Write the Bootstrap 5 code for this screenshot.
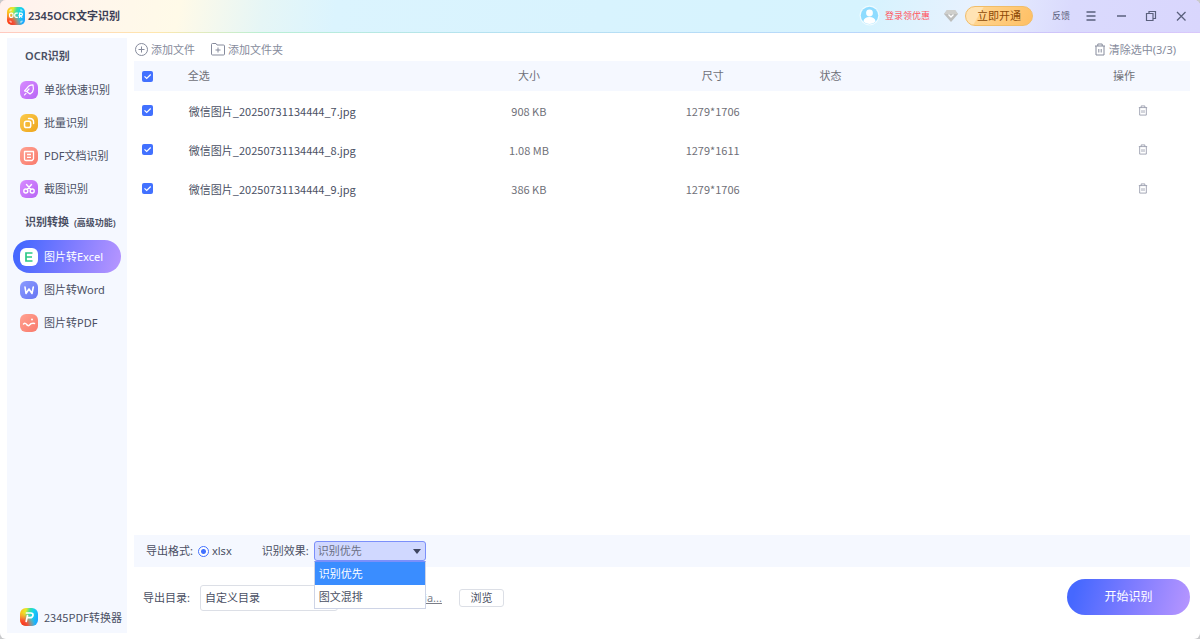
<!DOCTYPE html>
<html lang="zh-CN">
<head>
<meta charset="utf-8">
<meta name="viewport" content="width=device-width, initial-scale=1">
<title>2345OCR文字识别</title>
<link rel="stylesheet" href="https://cdn.jsdelivr.net/npm/bootstrap@5.3.0/dist/css/bootstrap.min.css">
<style>
  html { background: #c9cacc; overflow: hidden; }
  body { font: 11px/16px "Noto Sans", "Noto Sans CJK SC", sans-serif; color: #4a4f63; background: #fff; overflow: hidden; border-radius: 6px; }
  button, select { font: inherit; color: inherit; }
  .btn-plain { border: 0; background: none; padding: 0; display: inline-flex; align-items: center; }
  svg { display: block; flex: none; }
  a { color: inherit; text-decoration: none; }

  .titlebar { height: 33px; padding: 0 13px 1px 7px; border-bottom: 1px solid transparent;
    background: linear-gradient(100deg, #fff1ee 0%, #fff6ec 7%, #fffae8 15%, #e6f6f6 22%, #dbf4fe 28%, #d8f3fe 50%, #d6f3fe 72%, #e8f1fe 81%, #dadafd 89%, #d9d6fd 100%) padding-box,
      linear-gradient(90deg, #ffc9c0, #ffe7ae 13%, #b9efd4 22%, #b5e2f0 40%, #b8d8fb 70%, #cfc4fa 88%, #d9c8fb) border-box; }
  .app-name { font-weight: 600; color: #3c4056; margin-left: 3px; }
  .tiny { font-size: 9px; }
  .login { color: #ff5560; gap: 5px; }
  .vip-gem { margin: 0 7px 0 14px; }
  .open-vip { height: 20px; width: 68px; border-radius: 10px; border: 1px solid #f1bd68; color: #8d4a08;
    background: linear-gradient(120deg, #ffe3b4 0 22%, #ffd38d 24%, #ffbf63); padding: 0; }
  .win-tools { gap: 18px; color: #5a607c; }
  .feedback { margin: 0 -3px 0 19px; }

  .work { min-height: 0; padding: 5px 10px 0 7px; gap: 7px; }
  .side { width: 120px; background: #f5f8ff; padding-top: 1px; margin-bottom: 6px; }
  .side h2 { font-size: 11px; line-height: 34px; font-weight: 600; margin: 0; padding-left: 18px; color: #4a4f63; white-space: nowrap; }
  .side h2 .tiny { margin-left: 2px; }
  .side-link { height: 33px; margin: 0 6px; padding-left: 7px; gap: 6px; border-radius: 17px; white-space: nowrap; }
  .side-link.active, .start { background: linear-gradient(105deg, #4668ff 8%, #7c7bff 50%, #b394ff 96%); color: #fff; }
  .narrow, .files td { font-family: "Noto Sans CJK SC", sans-serif; }

  .tools { height: 23px; color: #868b9c; padding: 0 14px 0 1px; }
  .tools .btn-plain { gap: 3px; }
  .files { table-layout: fixed; margin: 0; }
  .files th, .files td { padding: 0; border: 0; font-weight: 400; text-align: center; vertical-align: middle; box-shadow: none; color: #6f7078; height: 39px; background: none; }
  .files thead th { height: 30px; background: #f5f8ff; }
  .files .c-check { text-align: left; padding-left: 8px; }
  .files .c-name { text-align: left; white-space: nowrap; }
  .files td.c-name { color: #4a4f63; padding-left: 1px; }
  .files .c-state { text-align: left; padding-left: 15px; }
  .files td.c-act { padding-left: 39px; }
  .files .btn-plain { color: #9498a8; }
  .files .form-check-input, .format .form-check-input { width: 11px; height: 11px; margin: 0; float: none; display: block; flex: none; }
  .files .form-check-input { border-radius: 2px; border: 0; }
  .files .form-check-input:checked { background: #4271ff url("data:image/svg+xml,%3Csvg xmlns='http://www.w3.org/2000/svg' viewBox='0 0 11 11'%3E%3Cpath d='m2.500 5.300 2.200 2.200 4-4' fill='none' stroke='%23fff' stroke-width='1.200'/%3E%3C/svg%3E"); }
  .format .form-check-input:checked { border-color: #4271ff; background: radial-gradient(circle, #4271ff 0 2px, #fff 3px); }

  .format { height: 32px; background: #f5f8ff; padding-left: 12px; }
  .format .form-check-input { margin: 0 3px 0 5px; }
  .effect { margin: 0 5px 0 30px; }
  .pick { width: 112px; height: 20px; border: 1px solid #7b8ffa; border-radius: 3px; background: #d0d8ff; padding: 0 3px; appearance: none; display: block; color: #6a6f84; outline: 0; }
  .pick-arrow { right: 5px; top: 8px; pointer-events: none; }
  .pick-list { left: 0; top: 20px; width: 112px; z-index: 5; background: #fff; border: 1px solid #ced4e6; border-top-color: #7b8ffa; line-height: 23px; }
  .pick-list li { padding-left: 4px; }
  .pick-list .chosen { background: #3a8dff; color: #fff; }
  .output { height: 62px; margin-bottom: 10px; padding-left: 9px; }
  .folder { width: 138px; height: 26px; border: 1px solid #dcdfe6; border-radius: 3px; background-color: #fff; padding: 0 4px; appearance: none; margin-left: 10px; }
  .path { width: 105px; padding-right: 1px; text-align: right; text-decoration: underline; color: #7b7e88; }
  .browse { width: 45px; height: 18px; border: 1px solid #dcdfe6; border-radius: 3px; background: #fff; padding: 0; margin-left: 16px; }
  .start { width: 123px; height: 36px; border: 0; border-radius: 18px; font-size: 12px; margin-bottom: 2px; }
</style>
</head>
<body class="d-flex flex-column vh-100">

<svg width="0" height="0" class="position-absolute" aria-hidden="true">
  <defs>
    <linearGradient id="gPurple" x1="0" y1="0" x2="1" y2="1"><stop offset="0" stop-color="#d88cff"/><stop offset="1" stop-color="#b765f5"/></linearGradient>
    <linearGradient id="gGold" x1="0" y1="0" x2="1" y2="1"><stop offset="0" stop-color="#fccb4b"/><stop offset="1" stop-color="#eda51d"/></linearGradient>
    <linearGradient id="gCoral" x1="0" y1="0" x2="1" y2="1"><stop offset="0" stop-color="#ffa291"/><stop offset="1" stop-color="#f97a6c"/></linearGradient>
    <linearGradient id="gBlue" x1="0" y1="0" x2="1" y2="1"><stop offset="0" stop-color="#8c9cff"/><stop offset="1" stop-color="#6675f3"/></linearGradient>
    <linearGradient id="gRain" x1="0" y1=".3" x2="1" y2=".6"><stop offset="0" stop-color="#ffc21a"/><stop offset=".25" stop-color="#e6ea2c"/><stop offset=".45" stop-color="#3fe09c"/><stop offset=".65" stop-color="#16d3ee"/><stop offset="1" stop-color="#1ea6ff"/></linearGradient>
    <radialGradient id="gRain2" cx=".1" cy="1" r=".75"><stop offset="0" stop-color="#ff2318"/><stop offset=".45" stop-color="#ff4a30" stop-opacity=".9"/><stop offset="1" stop-color="#ff7a40" stop-opacity="0"/></radialGradient>
    <symbol id="trash" viewBox="0 0 12 13"><path d="M1 3h10M3.800 3V1h4.400v2M2 3v9h8V3M4.800 6v3.500M7.200 6v3.500" fill="none" stroke="currentColor" stroke-linejoin="round"/></symbol>
  </defs>
</svg>

<header class="titlebar d-flex align-items-center">
  <svg width="18" height="18" viewBox="0 0 18 18"><rect width="18" height="18" rx="5" fill="url(#gRain)"/><rect width="18" height="18" rx="5" fill="url(#gRain2)"/>
    <g fill="none" stroke="#fff"><path d="M3 4.500V3h2M13 3h2v1.500M3 13.500V15h2M13 15h2v-1.500" stroke-width=".7"/><g stroke-width="1.200"><rect x="2.600" y="6.200" width="3.400" height="4.200" rx="1.300"/><path d="M10.800 6.200H9.200q-1.500 0-1.500 2.100t1.500 2.100h1.600M12.500 11V6.200h1.700q1.200 0 1.200 1.200t-1.200 1.200h-1.500l2.600 2"/></g></g></svg>
  <span class="app-name">2345OCR文字识别</span>
  <div class="d-flex align-items-center ms-auto">
    <a href="#" class="login tiny d-flex align-items-center">
      <svg width="21" height="21" viewBox="0 0 21 21"><circle cx="10.500" cy="10.500" r="10" fill="#effbff"/><circle cx="10.500" cy="10.500" r="8.700" fill="#8fdcff"/><circle cx="10.500" cy="8" r="3.400" fill="#fff"/><path d="M4.300 16.500q.7-4.500 6.200-4.500t6.200 4.500a8.700 8.700 0 0 1-12.400 0z" fill="#fff"/></svg>
      登录领优惠</a>
    <svg class="vip-gem" width="14" height="12" viewBox="0 0 14 12"><path d="M3 0h8l3 4-7 8L0 4z" fill="#bdbebd"/><path d="M3 0h8l3 4H0z" fill="#cfcfcc"/><path d="M4.500 4.500 7 7l2.500-2.500" fill="none" stroke="#fff" stroke-width="1.300"/></svg>
    <button type="button" class="open-vip">立即开通</button>
    <div class="win-tools d-flex align-items-center">
      <a href="#" class="tiny feedback">反馈</a>
      <button type="button" class="btn-plain" aria-label="菜单"><svg width="12" height="12" viewBox="0 0 12 12"><path d="M1.500 2h9M1.500 6h9M1.500 10h9" stroke="currentColor" stroke-width="1.300"/></svg></button>
      <button type="button" class="btn-plain" aria-label="最小化"><svg width="12" height="12" viewBox="0 0 12 12"><path d="M2 6h9" stroke="currentColor" stroke-width="1.500"/></svg></button>
      <button type="button" class="btn-plain" aria-label="还原"><svg width="12" height="12" viewBox="0 0 12 12"><path d="M1.500 3.500h6.500v7H1.500zM4 3.500v-2h6.500v7H8" fill="none" stroke="currentColor" stroke-width="1.200"/></svg></button>
      <button type="button" class="btn-plain" aria-label="关闭"><svg width="12" height="12" viewBox="0 0 12 12"><path d="m2 2 8.500 8.500m0-8.500L2 10.500" stroke="currentColor" stroke-width="1.300"/></svg></button>
    </div>
  </div>
</header>

<div class="work d-flex flex-grow-1">
  <nav class="side d-flex flex-column flex-shrink-0">
    <h2>OCR识别</h2>
    <a href="#" class="side-link d-flex align-items-center"><svg width="18" height="18" viewBox="0 0 18 18"><rect width="18" height="18" rx="6" fill="url(#gPurple)"/><path d="M13 3.800Q8.500 4 7 7.200L4.500 10l2.200.5 3.300 2.500 2.500-2Q14 8 13 3.800zM6.700 10.500 9 8M6 12.300l-1.500 1.500" fill="none" stroke="#fff" stroke-width="1.200" stroke-linejoin="round" stroke-linecap="round"/></svg>单张快速识别</a>
    <a href="#" class="side-link d-flex align-items-center"><svg width="18" height="18" viewBox="0 0 18 18"><rect width="18" height="18" rx="6" fill="url(#gGold)"/><rect x="4.500" y="7.300" width="6.200" height="6.200" rx="1.800" fill="none" stroke="#fff" stroke-width="1.500"/><path d="M8.500 4.500h1.300q3.800 0 3.800 3.800v1.200" fill="none" stroke="#fff" stroke-width="1.400" stroke-linecap="round"/></svg>批量识别</a>
    <a href="#" class="side-link d-flex align-items-center"><svg width="18" height="18" viewBox="0 0 18 18"><rect width="18" height="18" rx="6" fill="url(#gCoral)"/><path d="M4.500 4.500h9v7.500l-1.500 1.500H6q-1.500 0-1.500-1.500zM7 7.500h4M7 10.300h4" fill="none" stroke="#fff" stroke-width="1.300" stroke-linejoin="round"/></svg>PDF文档识别</a>
    <a href="#" class="side-link d-flex align-items-center"><svg width="18" height="18" viewBox="0 0 18 18"><rect width="18" height="18" rx="6" fill="url(#gPurple)"/><g fill="none" stroke="#fff" stroke-width="1.400" stroke-linecap="round"><circle cx="5.800" cy="11" r="2"/><circle cx="12.200" cy="11" r="2"/><path d="m6.500 4.500 4.500 5M11.500 4.500 7 9.500"/></g></svg>截图识别</a>
    <h2>识别转换 <span class="tiny">(高级功能)</span></h2>
    <a href="#" class="side-link active d-flex align-items-center"><svg width="18" height="18" viewBox="0 0 18 18"><rect width="18" height="18" rx="6" fill="#fff"/><path d="M12.500 5H6v8h6.500M6 9h6" fill="none" stroke="#2cc987" stroke-width="1.700"/></svg>图片转Excel</a>
    <a href="#" class="side-link d-flex align-items-center"><svg width="18" height="18" viewBox="0 0 18 18"><rect width="18" height="18" rx="6" fill="url(#gBlue)"/><path d="m5 6 1 6.500L9 8l3 4.500L13.300 6" fill="none" stroke="#fff" stroke-width="1.600" stroke-linejoin="round" stroke-linecap="round"/></svg>图片转Word</a>
    <a href="#" class="side-link d-flex align-items-center"><svg width="18" height="18" viewBox="0 0 18 18"><rect width="18" height="18" rx="6" fill="url(#gCoral)"/><path d="M3.500 10q1.800-1.500 3.200.5T9.500 11l1.500-1.300q1-.5 3.500-.3" fill="none" stroke="#fff" stroke-width="1.500" stroke-linecap="round"/><circle cx="12" cy="5.500" r="1" fill="#fff"/></svg>图片转PDF</a>
    <a href="#" class="side-link narrow d-flex align-items-center mt-auto"><svg width="18" height="18" viewBox="0 0 18 18"><rect width="18" height="18" rx="6" fill="url(#gRain)"/><rect width="18" height="18" rx="6" fill="url(#gRain2)"/><path d="M6.500 5h4.300q2.500 0 2.200 2.300-.4 2.400-3 2.400H8M7.500 7.500l-1.300 6" fill="none" stroke="#fff" stroke-width="1.700" stroke-linecap="round"/></svg>2345PDF转换器</a>
  </nav>

  <main class="d-flex flex-column flex-grow-1">
    <div class="tools d-flex align-items-center">
      <button type="button" class="btn-plain"><svg width="13" height="13" viewBox="0 0 13 13"><path d="M6.500 3.500v6M3.500 6.500h6" stroke="currentColor"/><circle cx="6.500" cy="6.500" r="6" fill="none" stroke="currentColor"/></svg>添加文件</button>
      <button type="button" class="btn-plain ms-3"><svg width="14" height="13" viewBox="0 0 14 13"><path d="M.5 1.500q0-1 1-1H5l1 1.500h6.500q1 0 1 1v8q0 1-1 1h-11q-1 0-1-1zM7 4.500v5M4.500 7h5" fill="none" stroke="currentColor"/></svg>添加文件夹</button>
      <button type="button" class="btn-plain ms-auto"><svg width="12" height="13"><use href="#trash"/></svg>清除选中(3/3)</button>
    </div>

    <table class="files table">
      <colgroup><col style="width:5.100%"><col style="width:23.600%"><col style="width:17.400%"><col style="width:17.400%"><col style="width:24%"><col style="width:12.500%"></colgroup>
      <thead>
        <tr><th class="c-check"><input class="form-check-input" type="checkbox" id="all" checked></th><th class="c-name"><label for="all">全选</label></th><th>大小</th><th>尺寸</th><th class="c-state">状态</th><th>操作</th></tr>
      </thead>
      <tbody>
        <tr><td class="c-check"><input class="form-check-input" type="checkbox" id="f7" checked></td><td class="c-name"><label for="f7">微信图片_20250731134444_7.jpg</label></td><td>908 KB</td><td>1279*1706</td><td></td><td class="c-act"><button type="button" class="btn-plain" aria-label="删除"><svg width="10" height="11"><use href="#trash"/></svg></button></td></tr>
        <tr><td class="c-check"><input class="form-check-input" type="checkbox" id="f8" checked></td><td class="c-name"><label for="f8">微信图片_20250731134444_8.jpg</label></td><td>1.08 MB</td><td>1279*1611</td><td></td><td class="c-act"><button type="button" class="btn-plain" aria-label="删除"><svg width="10" height="11"><use href="#trash"/></svg></button></td></tr>
        <tr><td class="c-check"><input class="form-check-input" type="checkbox" id="f9" checked></td><td class="c-name"><label for="f9">微信图片_20250731134444_9.jpg</label></td><td>386 KB</td><td>1279*1706</td><td></td><td class="c-act"><button type="button" class="btn-plain" aria-label="删除"><svg width="10" height="11"><use href="#trash"/></svg></button></td></tr>
      </tbody>
    </table>

    <div class="format d-flex align-items-center mt-auto">
      <span>导出格式:</span>
      <input class="form-check-input" type="radio" name="fmt" id="xlsx" checked><label for="xlsx">xlsx</label>
      <label class="effect" for="effect">识别效果:</label>
      <div class="position-relative">
        <select class="pick" id="effect"><option>识别优先</option><option>图文混排</option></select>
        <svg class="pick-arrow position-absolute" width="8" height="5" viewBox="0 0 8 5"><path d="M0 0h8L4 5z" fill="#3f4560"/></svg>
        <ul class="pick-list position-absolute list-unstyled mb-0" role="listbox"><li class="chosen" role="option">识别优先</li><li role="option">图文混排</li></ul>
      </div>
    </div>
    <div class="output d-flex align-items-center">
      <label for="folder">导出目录:</label>
      <select class="folder" id="folder"><option>自定义目录</option></select>
      <a href="#" class="path">ia...</a>
      <button type="button" class="browse">浏览</button>
      <button type="button" class="start ms-auto">开始识别</button>
    </div>
  </main>
</div>
<script src="https://cdn.jsdelivr.net/npm/bootstrap@5.3.0/dist/js/bootstrap.bundle.min.js"></script>
</body>
</html>
